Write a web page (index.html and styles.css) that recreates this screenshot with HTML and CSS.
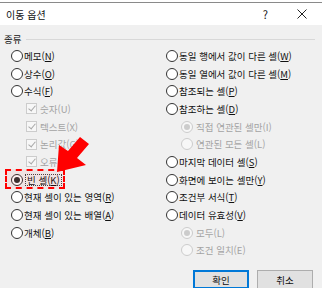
FILE: index.html
```html
<!DOCTYPE html>
<html lang="ko">
<head>
  <meta charset="UTF-8" />
  <title>이동 옵션</title>
  <link rel="stylesheet" href="styles.css">
</head>
<body>

<div class="topline"></div>
<div class="titlebar">
  <span class="title">이동 옵션</span>
  <span class="help">?</span>
  <svg class="close" width="10" height="10" viewBox="0 0 10 10">
    <path d="M0.5 0.5 L9.5 9.5 M9.5 0.5 L0.5 9.5" stroke="#222" stroke-width="1" fill="none" />
  </svg>
</div>

<div class="dialog">
  <div class="group-head">
    <span>종류</span>
    <div class="rule"></div>
  </div>

  <div class="columns">
    <div class="col">
      <div class="opt"><span class="radio"></span>메모(<u>N</u>)</div>
      <div class="opt"><span class="radio"></span>상수(<u>O</u>)</div>
      <div class="opt"><span class="radio"></span>수식(<u>F</u>)</div>
      <div class="opt sub off"><span class="check"></span>숫자(U)</div>
      <div class="opt sub off"><span class="check"></span>텍스트(X)</div>
      <div class="opt sub off"><span class="check"></span>논리값(G)</div>
      <div class="opt sub off"><span class="check"></span>오류(E)</div>
      <div class="opt marked"><span class="radio on"></span><span class="focus">빈 셀(<u>K</u>)</span></div>
      <div class="opt"><span class="radio"></span>현재 셀이 있는 영역(<u>R</u>)</div>
      <div class="opt"><span class="radio"></span>현재 셀이 있는 배열(<u>A</u>)</div>
      <div class="opt"><span class="radio"></span>개체(<u>B</u>)</div>
    </div>

    <div class="col">
      <div class="opt"><span class="radio"></span>동일 행에서 값이 다른 셀(<u>W</u>)</div>
      <div class="opt"><span class="radio"></span>동일 열에서 값이 다른 셀(<u>M</u>)</div>
      <div class="opt"><span class="radio"></span>참조되는 셀(<u>P</u>)</div>
      <div class="opt"><span class="radio"></span>참조하는 셀(<u>D</u>)</div>
      <div class="opt sub off"><span class="radio on"></span>직접 연관된 셀만(I)</div>
      <div class="opt sub off"><span class="radio"></span>연관된 모든 셀(L)</div>
      <div class="opt"><span class="radio"></span>마지막 데이터 셀(<u>S</u>)</div>
      <div class="opt"><span class="radio"></span>화면에 보이는 셀만(<u>Y</u>)</div>
      <div class="opt"><span class="radio"></span>조건부 서식(<u>T</u>)</div>
      <div class="opt"><span class="radio"></span>데이터 유효성(<u>V</u>)</div>
      <div class="opt sub off"><span class="radio on"></span>모두(L)</div>
      <div class="opt sub off"><span class="radio"></span>조건 일치(E)</div>
    </div>
  </div>

  <div class="buttons">
    <button class="btn default">확인</button>
    <button class="btn">취소</button>
  </div>

  <!-- callout arrow pointing at the chosen option -->
  <svg class="arrow" width="46" height="46" viewBox="0 0 46 46">
    <polygon points="9,42 11,15 20,21 32,7 41,14 29,28 38,35" fill="#ff0000" />
  </svg>
</div>

</body>
</html>
```

FILE: styles.css
```css
body {
  margin: 0;
  font-family: "Noto Sans CJK KR", "Noto Sans", sans-serif;
  font-size: 9.5px;
  color: #111;
  background-color: #fff;
}

.topline {
  height: 2px;
  border-bottom: 1px solid #8a8a8a;
  background-color: #fff;
}

.titlebar {
  height: 22px;
  display: flex;
  align-items: center;
  padding-left: 6px;
  background-color: #fff;
}

.title {
  font-size: 10px;
  flex: 1;
}

.help {
  font-size: 11px;
  margin-right: 29px;
}

.close {
  margin-right: 15px;
}

.dialog {
  position: relative;
  background-color: #f0f0f0;
  padding: 6px 9px 9px 0;
  height: 263px;
  box-sizing: border-box;
}

.group-head {
  display: flex;
  align-items: center;
  height: 16px;
  padding-left: 4px;
}

.rule {
  flex: 1;
  height: 1px;
  margin-left: 5px;
  margin-right: -2px;
  background-color: #d8d8d8;
}

.columns {
  display: grid;
  grid-template-columns: 155px 1fr;
  padding-left: 11px;
}

.opt {
  position: relative;
  height: 17.7px;
  display: flex;
  align-items: center;
  white-space: nowrap;
}

.opt u {
  text-decoration: underline;
  text-underline-offset: 1px;
}

.sub {
  padding-left: 15px;
}

.off {
  color: #a3a3a3;
}

.radio {
  width: 12px;
  height: 12px;
  box-sizing: border-box;
  border: 1px solid #333;
  border-radius: 50%;
  background-color: #fff;
  margin-right: 1px;
  display: flex;
  align-items: center;
  justify-content: center;
  flex-shrink: 0;
}

.radio.on::after {
  content: "";
  width: 6px;
  height: 6px;
  border-radius: 50%;
  background-color: #333;
}

.off .radio {
  border-color: #cccccc;
  background-color: #f7f7f7;
  margin-right: 3px;
}

.off .radio.on::after {
  background-color: #cccccc;
}

.check {
  position: relative;
  width: 11px;
  height: 11px;
  box-sizing: border-box;
  border: 1px solid #cccccc;
  background-color: #f7f7f7;
  margin-right: 3px;
}

.check::after {
  content: "";
  position: absolute;
  left: 3px;
  top: 0px;
  width: 3px;
  height: 6px;
  border-right: 1px solid #a8a8a8;
  border-bottom: 1px solid #a8a8a8;
  transform: rotate(40deg);
}

.marked::before {
  content: "";
  position: absolute;
  left: -6px;
  top: -2px;
  width: 60px;
  height: 20px;
  box-sizing: border-box;
  border: 2px dashed #ff0000;
  background-color: rgba(255, 0, 0, 0.05);
}

.focus {
  border: 1px dotted #444;
  padding: 0 1px;
  margin-left: 1px;
  line-height: 10px;
}

.buttons {
  display: flex;
  justify-content: flex-end;
  gap: 8px;
  margin-top: 11px;
}

.btn {
  width: 56px;
  height: 19px;
  padding: 0;
  font-family: inherit;
  font-size: 9.5px;
  color: #111;
  background-color: #e1e1e1;
  border: 1px solid #adadad;
}

.btn.default {
  border: 1px solid #0078d7;
  box-shadow: inset 0 0 0 1px #0078d7;
}

.arrow {
  position: absolute;
  left: 48px;
  top: 105px;
}
```
